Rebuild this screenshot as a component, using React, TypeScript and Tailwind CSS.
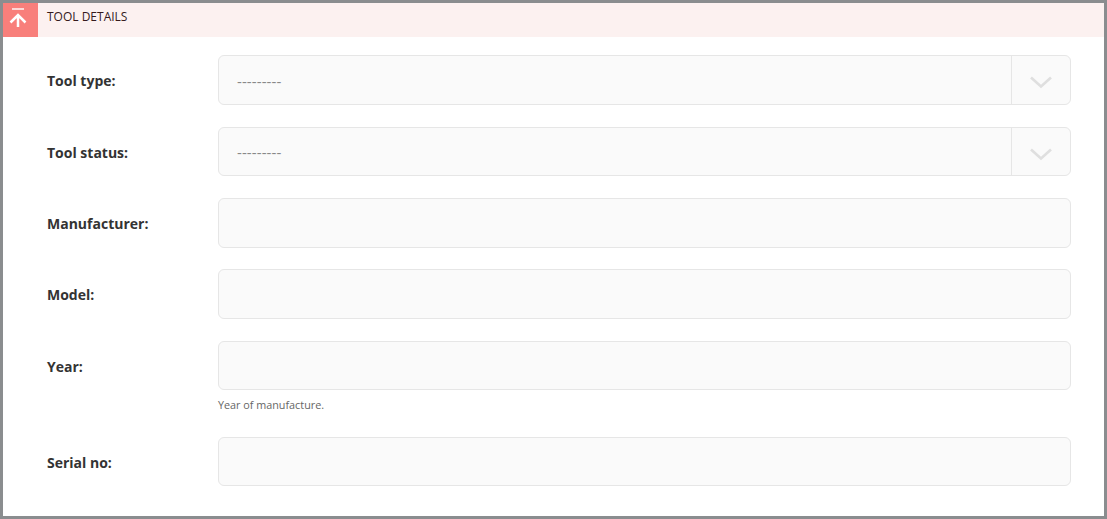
const FONT = "font-['Open_Sans',sans-serif]";

function Chevron() {
  return (
    <svg width="24" height="14" viewBox="0 0 24 14" fill="none" className="block">
      <path d="M2 2.5 L12 11.5 L22 2.5" stroke="#dfdfdf" strokeWidth="2.6" />
    </svg>
  );
}

function Row({ label, select, help }: { label: string; select?: boolean; help?: string }) {
  return (
    <div className="flex items-start">
      <label className="w-[171px] shrink-0 h-[49.6px] flex items-center text-[14px] font-bold text-[#333333] pt-[1.5px]">{label}</label>
      <div className="w-[853px]">
        <div className="h-[49.6px] rounded-[6px] border border-[#e6e6e6] bg-[#fafafa] flex items-stretch">
          {select && (
            <>
              <div className="flex-1 flex items-center pl-[18px] pt-[2px] text-[15px] tracking-[0.1px] text-[#888888]">---------</div>
              <div className="w-[59px] border-l border-[#e6e6e6] flex items-center justify-center pt-[5px]">
                <Chevron />
              </div>
            </>
          )}
        </div>
        {help && <p className="mt-[6px] h-[18.4px] leading-[18px] text-[10.8px] text-[#666666]">{help}</p>}
      </div>
    </div>
  );
}

export default function App() {
  return (
    <div className={`w-[1107px] h-[519px] border-3 border-[#8a8d8f] bg-white opacity-[0.999] ${FONT}`}>
      <div className="h-[34px] bg-[#fcf1f0] flex items-stretch">
        <div className="w-[35px] bg-[#f87f7b] flex items-start justify-start pl-[5.7px]">
          <svg width="20" height="24" viewBox="0 0 20 24" fill="none" className="mt-[2px]">
            <path d="M3 4 H15" stroke="#fff" strokeWidth="1.4" />
            <path d="M9 22 V10 M1.5 17.5 L9 10 L16.5 17.5" stroke="#fff" strokeWidth="2.5" />
          </svg>
        </div>
        <div className="pl-[9px] pt-[5px] text-[12px] leading-[18px] text-[#351a1c]">TOOL DETAILS</div>
      </div>
      <div className="pl-[44px] pt-[18.2px] flex flex-col gap-[21.8px]">
        <Row label="Tool type:" select />
        <Row label="Tool status:" select />
        <Row label="Manufacturer:" />
        <Row label="Model:" />
        <Row label="Year:" help="Year of manufacture." />
        <Row label="Serial no:" />
      </div>
    </div>
  );
}
